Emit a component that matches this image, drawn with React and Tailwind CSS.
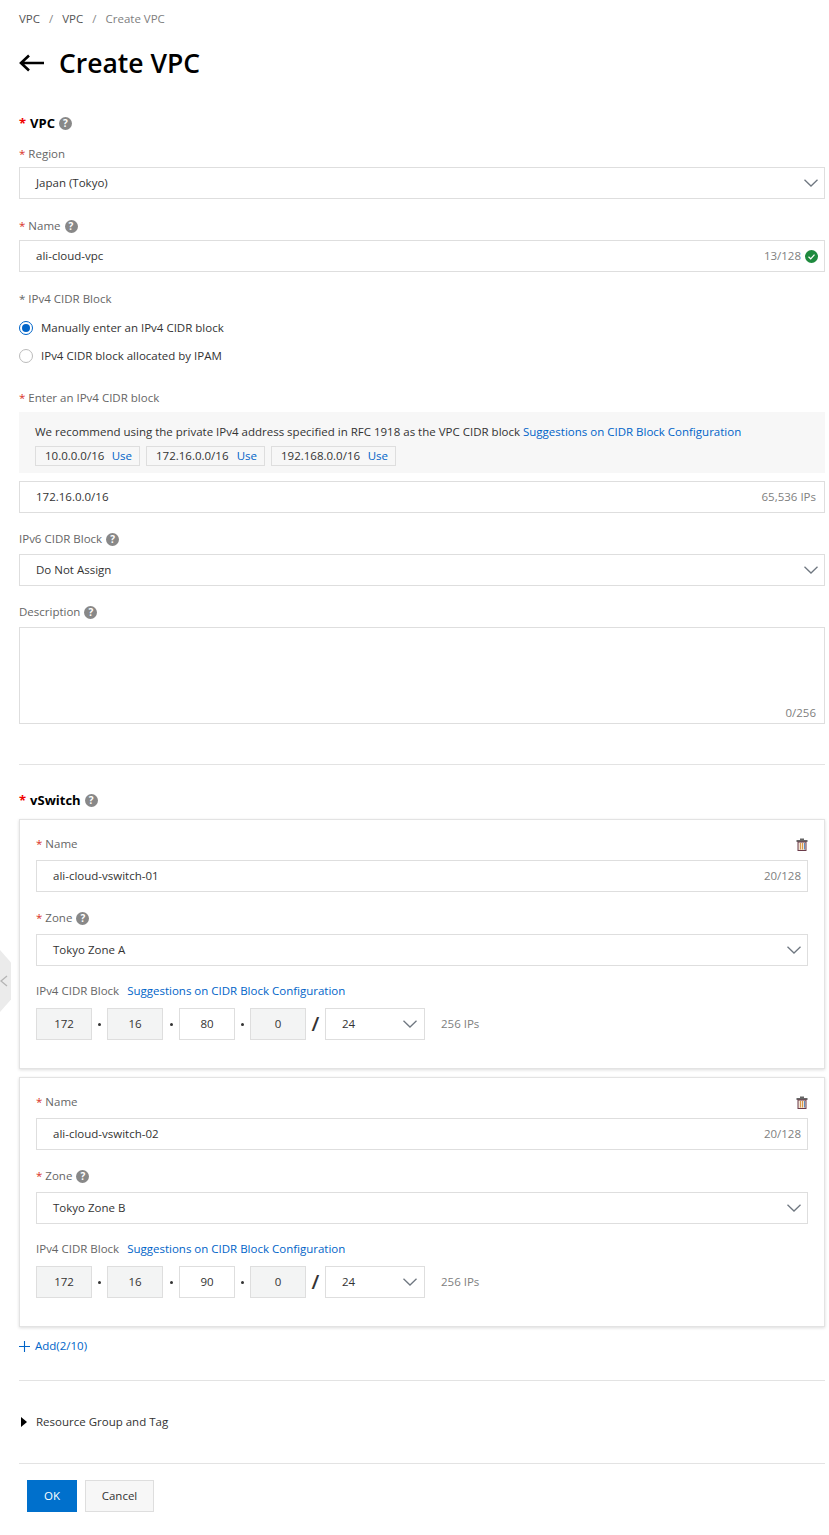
const Help = () => (
  <span className="inline-flex h-[13px] w-[13px] items-center justify-center rounded-full bg-[#888888] text-[10px] font-bold leading-none text-white">?</span>
);
const Star = ({ bold }) => <span className={bold ? "text-[#f00000] mr-[4px]" : "text-[#d93026] mr-[3px]"}>*</span>;
const Chevron = () => (
  <svg width="14" height="8" viewBox="0 0 14 8" fill="none" className="shrink-0"><path d="M0.5 0.8 L7 7 L13.5 0.8" stroke="#6f7780" strokeWidth="1.3" /></svg>
);
const Label = ({ req, help, mb = "mb-1", children }) => (
  <div className={`flex h-5 items-center gap-[4px] text-[#666666] ${mb}`}>
    <span>{req && <Star />}{children}</span>
    {help && <Help />}
  </div>
);
const Box = ({ children, right, pr = "pr-[6px]" }) => (
  <div className={`flex h-8 items-center justify-between border border-[#dedede] bg-white pl-4 ${pr} text-[#333333]`}>
    <span>{children}</span>
    {right}
  </div>
);
const Select = ({ children }) => (
  <div className="flex h-8 items-center justify-between border border-[#dedede] bg-white pl-4 pr-[6px] text-[#333333]">
    <span>{children}</span>
    <Chevron />
  </div>
);
const Count = ({ children }) => <span className="text-[#808080]">{children}</span>;
const Link = ({ children }) => <span className="text-[#0064c8]">{children}</span>;
const Tag = ({ ip, w }) => (
  <div className={`flex h-[20px] items-center justify-between border border-[#dedede] pl-[9px] pr-[7px] text-[#333333] ${w}`}>
    <span>{ip}</span><Link>Use</Link>
  </div>
);
const Octet = ({ v, grey }) => (
  <div className={`flex h-8 w-14 items-center justify-center border border-[#dedede] text-[#333333] ${grey ? "bg-[#f3f4f4]" : "bg-white"}`}>{v}</div>
);
const Dot = ({ w }) => <div className={`flex items-center justify-center ${w}`}><span className="h-[3px] w-[3px] rounded-full bg-[#333333]" /></div>;
const Trash = () => (
  <svg width="12" height="13" viewBox="0 0 12 13" fill="none">
    <rect x="0.5" y="2" width="11" height="2" fill="#666666" />
    <rect x="4" y="0.5" width="4" height="2" fill="#666666" />
    <rect x="2" y="4" width="8" height="8.5" fill="#f2e2d2" stroke="#6a3b4a" strokeWidth="1" />
    <rect x="4" y="5" width="1" height="6.5" fill="#d99a4a" />
    <rect x="6" y="5" width="1" height="6.5" fill="#d99a4a" />
    <rect x="8" y="5" width="1" height="6.5" fill="#5d8fc0" />
  </svg>
);
const Card = ({ name, zone, octet }) => (
  <div className="h-[250px] border border-[#e3e3e3] px-4 pt-[14px] shadow-[0_1px_3px_rgba(0,0,0,0.14)]">
    <div className="flex items-start justify-between">
      <Label req mb="mb-[6px]">Name</Label>
      <div className="mt-1"><Trash /></div>
    </div>
    <Box right={<Count>20/128</Count>}>{name}</Box>
    <div className="mt-4"><Label req help mb="mb-[6px]">Zone</Label></div>
    <Select>{zone}</Select>
    <div className="mb-[7px] mt-[15px] flex h-5 items-center gap-2">
      <span className="text-[#666666]">IPv4 CIDR Block</span>
      <Link>Suggestions on CIDR Block Configuration</Link>
    </div>
    <div className="flex items-center">
      <Octet v="172" grey /><Dot w="w-[15px]" /><Octet v="16" grey /><Dot w="w-4" /><Octet v={octet} /><Dot w="w-[15px]" /><Octet v="0" grey />
      <span className="flex w-[19px] justify-center text-[20px] font-semibold leading-none text-[#333333]">/</span>
      <div className="flex h-8 w-[100px] items-center justify-between border border-[#dedede] pl-4 pr-[7px] text-[#333333]">
        <span>24</span><Chevron />
      </div>
      <span className="ml-4 text-[#808080]">256 IPs</span>
    </div>
  </div>
);

export default function App() {
  return (
    <div className="relative h-[1535px] w-[829px] overflow-hidden bg-white pl-[19px] pr-1 font-['Open_Sans',sans-serif] text-[11.5px] leading-5">
      <div className="flex h-[37px] items-center gap-[9px] text-[#555555]">
        <span>VPC</span><span className="text-[#888888]">/</span><span>VPC</span><span className="text-[#888888]">/</span><span className="text-[#808080]">Create VPC</span>
      </div>
      <div className="flex h-[52px] items-center gap-[14px] text-black">
        <svg width="26" height="18" viewBox="0 0 26 18" fill="none"><path d="M25 9 H2 M10 1.5 L2 9 L10 16.5" stroke="#000" strokeWidth="2.6" /></svg>
        <span className="text-[26.5px] font-semibold leading-none">Create VPC</span>
      </div>
      <div className="mt-6 flex h-5 items-center gap-[4px] text-[13px] font-bold text-black">
        <span><Star bold />VPC</span><Help />
      </div>
      <div className="mt-[11px]"><Label req mb="mb-[3px]">Region</Label></div>
      <Select>Japan (Tokyo)</Select>

      <div className="mt-[17px]"><Label req help>Name</Label></div>
      <Box right={<span className="flex items-center gap-1"><Count>13/128</Count>
        <svg width="13" height="13" viewBox="0 0 13 13"><circle cx="6.5" cy="6.5" r="6.5" fill="#1e8a3e" /><path d="M3.5 6.8 L5.7 8.8 L9.5 4.6" fill="none" stroke="#fff" strokeWidth="1.2" /></svg></span>}>ali-cloud-vpc</Box>

      <div className="mt-[17px] flex h-5 items-center text-[#666666]"><span className="mr-[3px]">*</span>IPv4 CIDR Block</div>
      <div className="mt-[5px] flex h-7 items-center gap-2 text-[#333333]">
        <span className="flex h-[14px] w-[14px] items-center justify-center rounded-full border border-[#0064c8] bg-white"><span className="h-2 w-2 rounded-full bg-[#0064c8]" /></span>
        Manually enter an IPv4 CIDR block
      </div>
      <div className="flex h-7 items-center gap-2 text-[#333333]">
        <span className="h-[14px] w-[14px] rounded-full border border-[#bbbbbb] bg-white" />
        IPv4 CIDR block allocated by IPAM
      </div>

      <div className="mt-[18px]"><Label req>Enter an IPv4 CIDR block</Label></div>
      <div className="h-[61px] bg-[#f7f7f7] pl-4 pt-[10px]">
        <div className="text-[#333333]">We recommend using the private IPv4 address specified in RFC 1918 as the VPC CIDR block <Link>Suggestions on CIDR Block Configuration</Link></div>
        <div className="mt-[4px] flex gap-[6px]">
          <Tag ip="10.0.0.0/16" w="w-[105px]" /><Tag ip="172.16.0.0/16" w="w-[119px]" /><Tag ip="192.168.0.0/16" w="w-[125px]" />
        </div>
      </div>
      <div className="mt-2"><Box pr="pr-2" right={<Count>65,536 IPs</Count>}>172.16.0.0/16</Box></div>

      <div className="mt-[16px]"><Label help mb="mb-[5px]">IPv6 CIDR Block</Label></div>
      <Select>Do Not Assign</Select>

      <div className="mt-[16px]"><Label help mb="mb-[5px]">Description</Label></div>
      <div className="flex h-[97px] items-end justify-end border border-[#dedede] pr-2"><Count>0/256</Count></div>

      <div className="mt-10 h-px bg-[#e3e3e3]" />

      <div className="mt-[25px] flex h-5 items-center gap-[4px] text-[13px] font-bold text-black">
        <span><Star bold />vSwitch</span><Help />
      </div>
      <div className="mt-[9px] flex flex-col gap-2">
        <Card name="ali-cloud-vswitch-01" zone="Tokyo Zone A" octet="80" />
        <Card name="ali-cloud-vswitch-02" zone="Tokyo Zone B" octet="90" />
      </div>

      <div className="mt-[9px] flex h-5 items-center gap-[5px] text-[#0064c8]">
        <svg width="11" height="11" viewBox="0 0 11 11"><path d="M5.5 0 V11 M0 5.5 H11" stroke="#0064c8" strokeWidth="1.1" /></svg>
        Add(2/10)
      </div>
      <div className="mt-6 h-px bg-[#e3e3e3]" />
      <div className="mt-[31px] flex h-5 items-center gap-[9px] text-[#333333]">
        <svg width="6" height="10" viewBox="0 0 6 10" className="ml-[2px]"><path d="M0 0 L6 5 L0 10 Z" fill="#000" /></svg>
        Resource Group and Tag
      </div>
      <div className="mt-[31px] h-px bg-[#e3e3e3]" />
      <div className="mt-4 flex gap-2 pl-2">
        <div className="flex h-8 w-[50px] items-center justify-center bg-[#0070cc] text-white">OK</div>
        <div className="flex h-8 w-[69px] items-center justify-center border border-[#dedede] bg-[#f7f7f7] text-[#333333]">Cancel</div>
      </div>

      <div className="absolute left-0 top-[950px] flex h-[62px] w-[11px] items-center bg-[#ebebeb] [clip-path:polygon(0_0,100%_20%,100%_80%,0_100%)]">
        <svg width="8" height="12" viewBox="0 0 8 12" fill="none"><path d="M7 1 L1 6 L7 11" stroke="#b5b5b5" strokeWidth="1.3" /></svg>
      </div>
    </div>
  );
}
